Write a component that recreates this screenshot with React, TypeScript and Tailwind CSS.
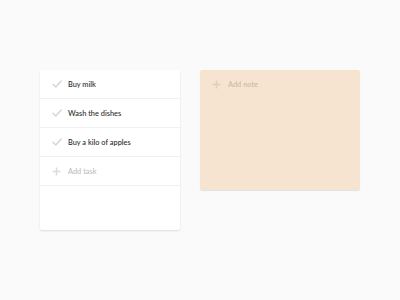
import React from 'react'

const tasks = ['Buy milk', 'Wash the dishes', 'Buy a kilo of apples']

function Check() {
  return (
    <svg width="10" height="8" viewBox="0 0 10 8" className="shrink-0">
      <path d="M1 4.2 L3.8 7 L9.2 1" fill="none" stroke="#d6d6d6" strokeWidth="1.5" strokeLinecap="round" strokeLinejoin="round" />
    </svg>
  )
}

function Plus({ color }: { color: string }) {
  return (
    <svg width="9" height="9" viewBox="0 0 9 9" className="shrink-0">
      <path d="M4.5 0.5 V8.5 M0.5 4.5 H8.5" stroke={color} strokeWidth="1.6" />
    </svg>
  )
}

export default function App() {
  return (
    <div className="w-[400px] h-[300px] bg-[#fafafa] flex items-start gap-5 pl-10 pt-[70px]" style={{ fontFamily: 'Lato, "Open Sans", sans-serif' }}>
      {/* Task list */}
      <div className="w-[140px] h-[160px] bg-white rounded-[2px] shadow-[0_1px_2px_rgba(0,0,0,0.12)] flex flex-col">
        {tasks.map((t) => (
          <div key={t} className="h-[29px] border-b border-[#f1f1f1] flex items-center pl-3 gap-[6px]">
            <Check />
            <span className="mt-[2px] text-[7.4px] font-medium text-[#2a2a2a]">{t}</span>
          </div>
        ))}
        <div className="h-[29px] border-b border-[#f1f1f1] flex items-center pl-3 gap-[7px]">
          <Plus color="#dcdcdc" />
          <span className="mt-[2px] text-[7.4px] font-medium text-[#bdbdbd]">Add task</span>
        </div>
      </div>

      {/* Note */}
      <div className="w-[160px] h-[120px] bg-[#f7e4d0] rounded-[2px] shadow-[0_1px_1px_rgba(0,0,0,0.1)] flex items-start pl-3 pt-[10px] gap-[7px]">
        <Plus color="#e3cdb7" />
        <span className="text-[7.4px] font-medium leading-[9px] text-[#cdb8a3]">Add note</span>
      </div>
    </div>
  )
}
